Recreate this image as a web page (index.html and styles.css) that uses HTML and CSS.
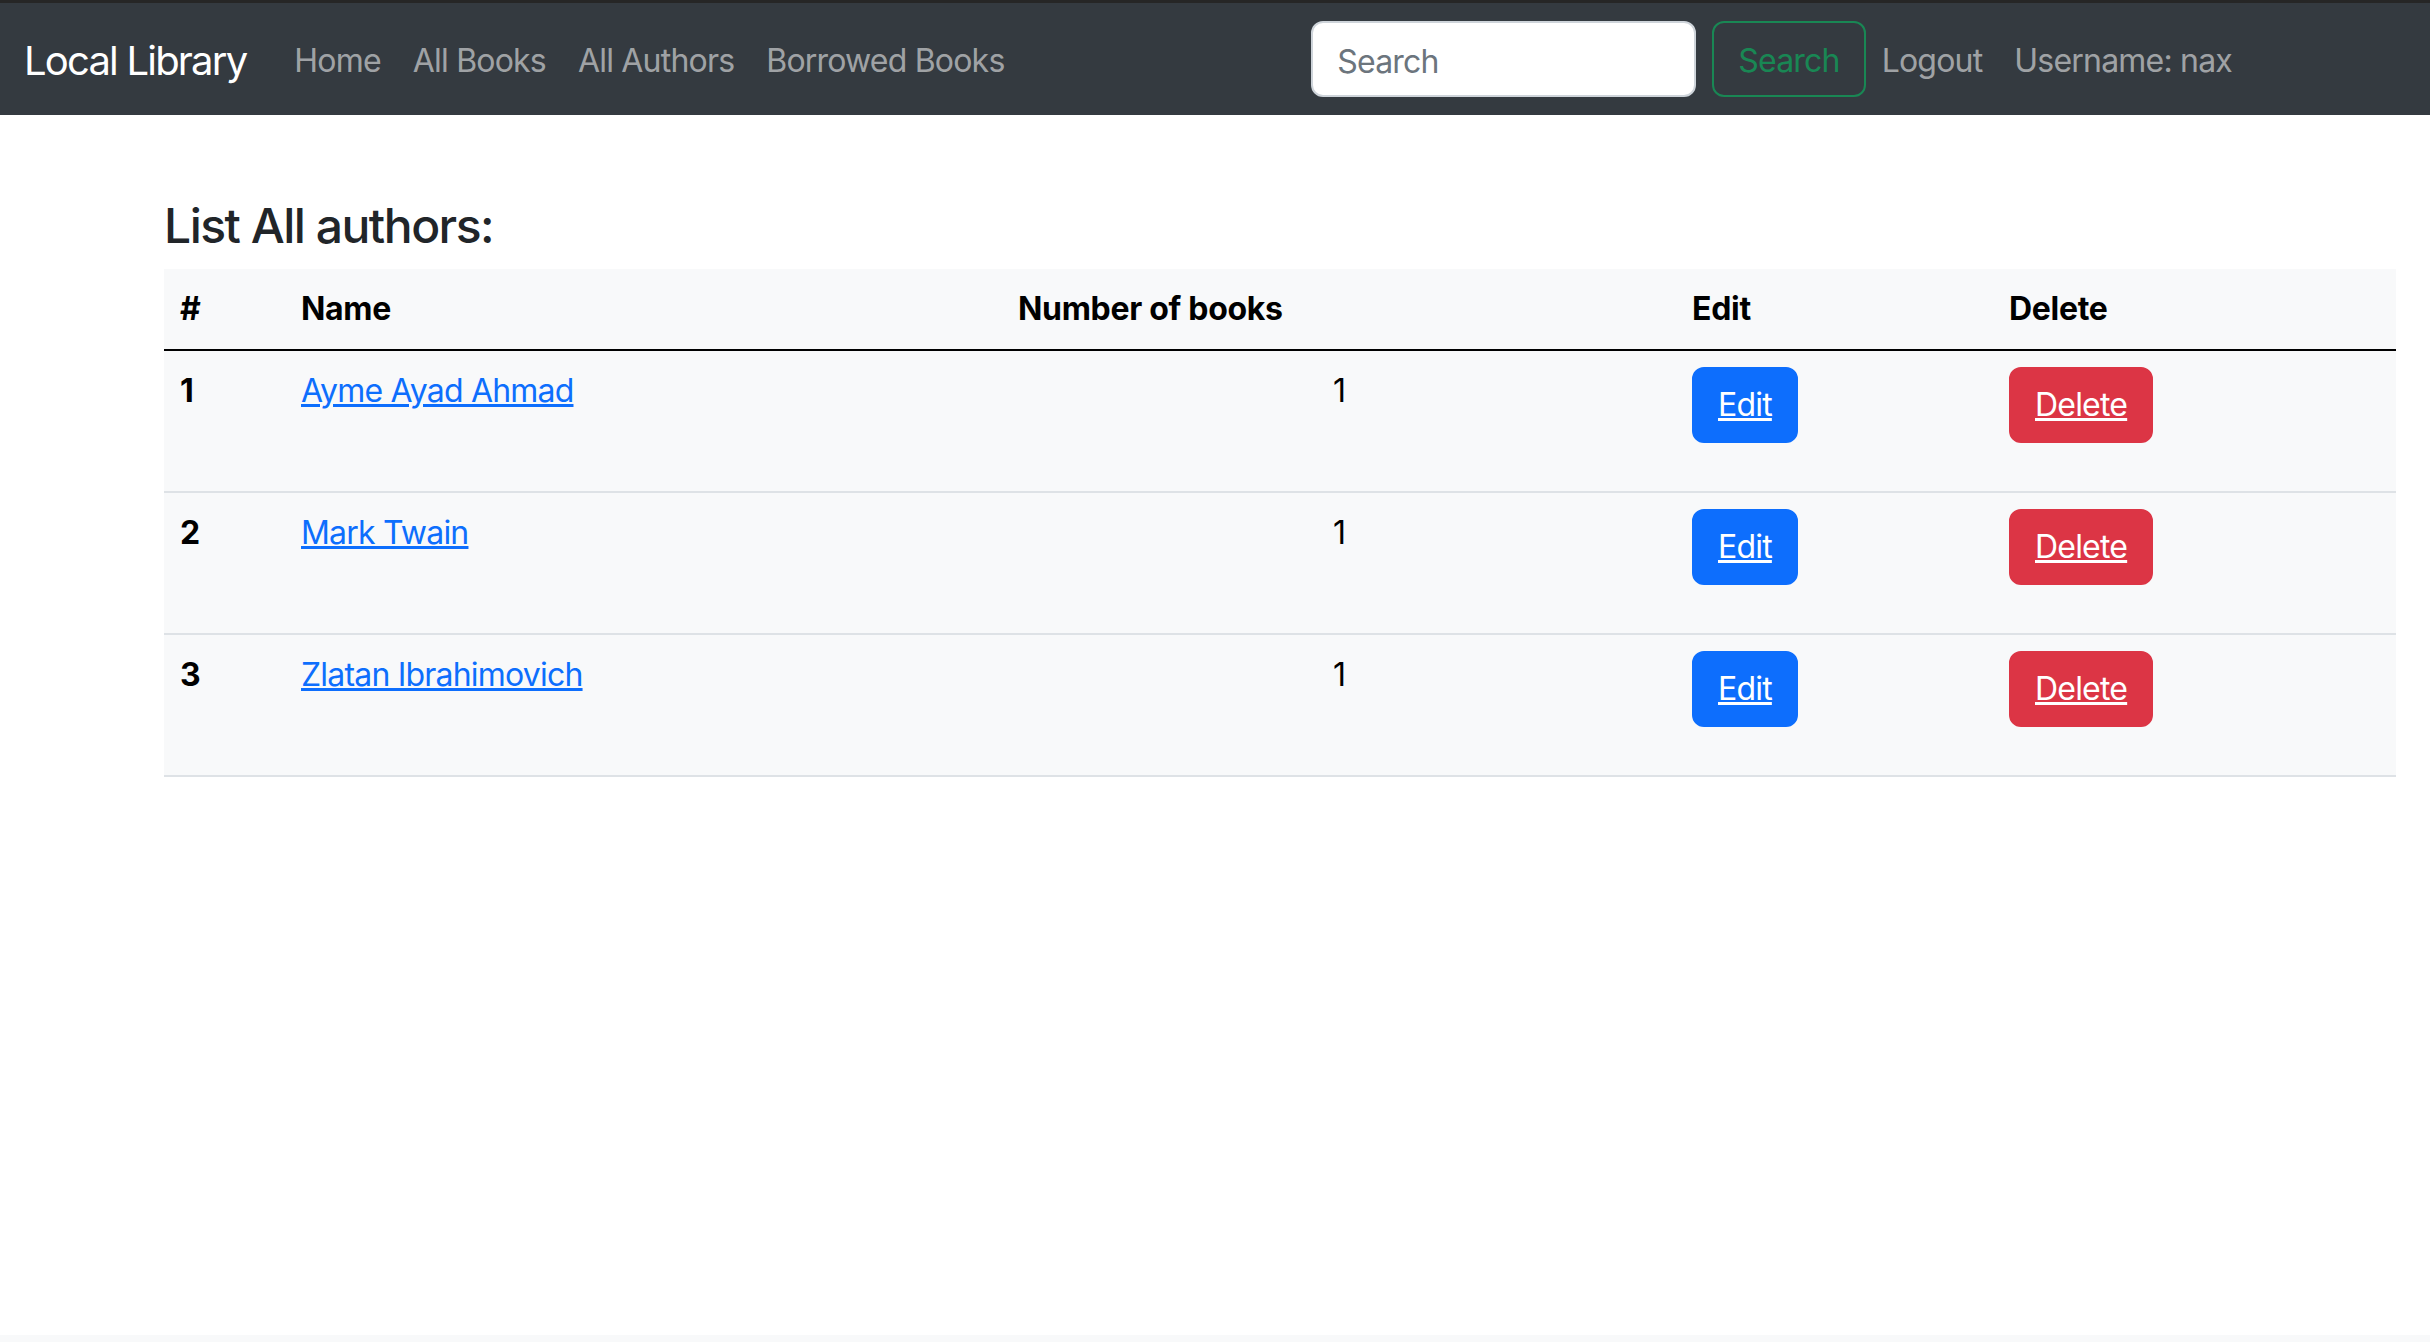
FILE: index.html
```html
<!DOCTYPE html>
<html lang="en">
<head>
<meta charset="utf-8">
<title>Local Library</title>
<link rel="stylesheet" href="styles.css">
</head>
<body>
<div class="page">
  <nav class="navbar">
    <a class="brand" href="#">Local Library</a>
    <ul class="nav nav-main">
      <li><a class="nav-link" href="#">Home</a></li>
      <li><a class="nav-link" href="#">All Books</a></li>
      <li><a class="nav-link" href="#">All Authors</a></li>
      <li><a class="nav-link" href="#">Borrowed Books</a></li>
    </ul>
    <form class="search-form">
      <input class="search-input" type="search" placeholder="Search">
      <button class="btn btn-outline-success" type="button">Search</button>
    </form>
    <ul class="nav">
      <li><a class="nav-link" href="#">Logout</a></li>
      <li><span class="nav-link">Username: nax</span></li>
    </ul>
  </nav>

  <main class="content">
    <h4 class="title">List All authors:</h4>
    <table class="table">
      <colgroup>
        <col class="c-num"><col class="c-name"><col class="c-books"><col class="c-edit"><col class="c-del">
      </colgroup>
      <thead>
        <tr><th>#</th><th>Name</th><th>Number of books</th><th>Edit</th><th>Delete</th></tr>
      </thead>
      <tbody>
        <tr>
          <th>1</th>
          <td><a class="link" href="#">Ayme Ayad Ahmad</a></td>
          <td class="center">1</td>
          <td><form class="cell-form"><a class="btn btn-primary" href="#">Edit</a></form></td>
          <td><form class="cell-form"><a class="btn btn-danger" href="#">Delete</a></form></td>
        </tr>
        <tr>
          <th>2</th>
          <td><a class="link" href="#">Mark Twain</a></td>
          <td class="center">1</td>
          <td><form class="cell-form"><a class="btn btn-primary" href="#">Edit</a></form></td>
          <td><form class="cell-form"><a class="btn btn-danger" href="#">Delete</a></form></td>
        </tr>
        <tr>
          <th>3</th>
          <td><a class="link" href="#">Zlatan Ibrahimovich</a></td>
          <td class="center">1</td>
          <td><form class="cell-form"><a class="btn btn-primary" href="#">Edit</a></form></td>
          <td><form class="cell-form"><a class="btn btn-danger" href="#">Delete</a></form></td>
        </tr>
      </tbody>
    </table>
  </main>

  <footer class="footer"></footer>
</div>
</body>
</html>
```
FILE: styles.css
```css
* { box-sizing: border-box; }

html, body {
  margin: 0;
  padding: 0;
}

body {
  font-family: Inter, "Liberation Sans", sans-serif;
  font-size: 32px;
  line-height: 1.5;
  letter-spacing: -0.8px;
  color: #212529;
  background: #fff;
}

.page {
  min-height: 100vh;
  display: flex;
  flex-direction: column;
}

/* Navbar */
.navbar {
  display: flex;
  align-items: center;
  background: #343a40;
  border-top: 3px solid #262626;
  padding: 16px 182px 16px 24px;
}

.brand {
  font-size: 40px;
  line-height: 60px;
  letter-spacing: -1.8px;
  padding: 12px 0 8px;
  margin-right: 32px;
  color: #fff;
  text-decoration: none;
  white-space: nowrap;
}

.nav {
  display: flex;
  list-style: none;
  margin: 0;
  padding: 0;
}

.nav-main { flex: 1; }

.nav-link {
  display: block;
  padding: 18px 16px 14px;
  color: rgba(255, 255, 255, 0.55);
  text-decoration: none;
  white-space: nowrap;
}

.search-form {
  display: flex;
  align-items: center;
}

.search-input {
  width: 385px;
  height: 76px;
  margin-right: 16px;
  padding: 14px 24px 10px;
  font: inherit;
  letter-spacing: -0.8px;
  color: #212529;
  background: #fff;
  border: 2px solid #ced4da;
  border-radius: 12px;
  outline: none;
}

.search-input::placeholder { color: #6c757d; }

/* Buttons */
.btn {
  display: inline-block;
  font: inherit;
  letter-spacing: -0.8px;
  line-height: 48px;
  padding: 14px 24px 10px;
  border: 2px solid transparent;
  border-radius: 12px;
  background: transparent;
  white-space: nowrap;
}

.btn-outline-success {
  color: #198754;
  border-color: #198754;
}

.btn-primary {
  color: #fff;
  background: #0d6efd;
  border-color: #0d6efd;
  text-decoration: underline;
}

.btn-danger {
  color: #fff;
  background: #dc3545;
  border-color: #dc3545;
  text-decoration: underline;
}

.cell-form .btn {
  padding: 12px 24px;
}

/* Content */
.content {
  flex: 1;
  padding: 82px 34px 0 164px;
}

.title {
  font-size: 48px;
  line-height: 1.2;
  font-weight: 500;
  letter-spacing: -1.5px;
  margin: 0 0 14px;
}

.table {
  width: 100%;
  table-layout: fixed;
  border-collapse: collapse;
  background: #f8f9fa;
  color: #000;
}

.c-num { width: 121px; }
.c-name { width: 717px; }
.c-books { width: 674px; }
.c-edit { width: 317px; }
.c-del { width: 403px; }

.table th,
.table td {
  padding: 16px;
  text-align: left;
  vertical-align: top;
  border-bottom: 2px solid #dee2e6;
}

.table th {
  font-weight: 700;
  letter-spacing: -0.3px;
}

.table thead th {
  border-bottom: 2px solid #000;
}

.table .center { text-align: center; }

.link { color: #0d6efd; text-decoration: underline; }

.cell-form { margin: 0 0 32px; }

.footer {
  height: 7px;
  background: #f8f9fa;
}
```
